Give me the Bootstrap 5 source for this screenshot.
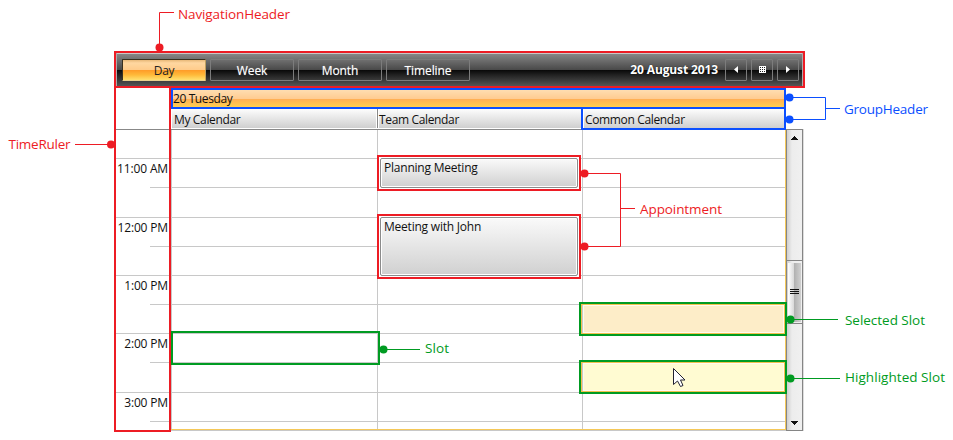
<!DOCTYPE html>
<html lang="en">
<head>
<meta charset="utf-8">
<meta name="viewport" content="width=device-width, initial-scale=1">
<title>Schedule view structure</title>
<link href="https://cdn.jsdelivr.net/npm/bootstrap@5.3.0/dist/css/bootstrap.min.css" rel="stylesheet">
<style>
body{width:953px;height:440px;overflow:hidden;background:#fff;font:12px/16px "Open Sans","Noto Sans",sans-serif;color:#111}
.stage{width:953px;height:440px;padding:51px 0 0 114px}
.sched{width:691px}
.navhead{height:37px;border:2px solid #ed1c24;padding:6px 4px 5px 6px;background:linear-gradient(#c8c8c8 0 1px,#868686 1px,#484848 17px,#080808 17px,#222 22px,#545454 33px);box-shadow:inset 1px 0 #aaa,inset -1px 0 #aaa}
.navhead .btn{width:84px;height:22px;padding:0;font-size:12px;line-height:22px;border:1px solid #7c7c7c;border-radius:1px;color:#fff;background:transparent;font-weight:500;letter-spacing:-.1px;text-shadow:0 0 1px #fff8}
.navhead .btn.sq{width:22px;line-height:0}
.navhead .btn.day{color:#222;border-color:#39301e;border-right-color:#bfa060;border-bottom-color:#e8cf8c;background:linear-gradient(#e8b878,#ffd7a0 3px,#ffcb8a 10px,#ff9a27 10px,#ffba3a 15px,#ffe070);font-weight:400;letter-spacing:-.3px;text-shadow:none}
.date{font-weight:700;letter-spacing:-.12px;color:#fff;line-height:22px;margin-right:3px;text-shadow:0 0 1px #000;white-space:nowrap}
.ruler{width:57px;height:344px;border:2px solid #ed1c24;border-top:0}
.rulertop{height:42px;border-bottom:1px solid #888}
.tick{height:29px;text-align:right;padding:2px 1px 0 0;white-space:nowrap;letter-spacing:-.15px;background:linear-gradient(#c8c8c8,#c8c8c8) right bottom/100% 1px no-repeat}
.tick.hour{background-size:19px 1px}
.tall{height:30px!important}
.grp{width:615px}
.dayhead{height:21px;border:2px solid #0b4fff;line-height:18px;letter-spacing:-.4px;background:linear-gradient(#ffddb0,#ffcb90 9px,#ffae55 9px,#ffcf50) padding-box}
.res{height:21px;border-bottom:1px solid #888;line-height:21px;white-space:nowrap;letter-spacing:-.35px}
.res>div{height:20px;padding-left:2px;border:1px solid #fff;border-top:0;background:linear-gradient(#fdfdfd,#cfcfcf)}
.res>div+div{border-left:0;box-shadow:inset 1px 0 #888,inset 2px 0 #fff}
.res>div:last-child{padding-left:3px}
.c1{width:206px}.c2{width:205px}.c3{flex:1}
.gridcol{border-left:1px solid #c8c8c8;height:299px;overflow:hidden}
.gridcol>div{height:29px;border-bottom:1px solid #c8c8c8}
.gridbody{height:300px;border-right:1px solid #f5c858;border-bottom:1px solid #f5c858;box-shadow:0 1px #c8c8c8}
.scroller{width:17px;height:302px;margin-top:41px;border:1px solid #858585;box-shadow:1px 0 #ddd;background:linear-gradient(90deg,#d0d0d0,#ededed 5px,#f0f0f0)}
.thumb{height:64px;width:15px;margin-top:130px;border:solid #858585;border-width:1px 0;padding:2px 1px 1px 1px}
.thumb>div{height:100%;background:linear-gradient(90deg,#fff,#d8d8d8 6px,#b0b0b0 6px,#d0d0d0)}
.ev{position:absolute;left:377px;width:204px;border:2px solid #ed1c24;background:#fff;padding:1px}
.ev>div{height:100%;border:1px solid #8b8b8b;border-radius:2px;box-shadow:inset 0 0 0 1px #fff;background:linear-gradient(#fafafa,#d0d0d0);padding:1px 0 0 3px;letter-spacing:-.22px}
.pick{position:absolute;border:2px solid #009b22;height:34px;left:579px;width:208px}
.pick>div{height:100%;border:1px solid #f2c14e;box-shadow:inset 1px 0 #c8c8c8,inset 2px 0 #fffaf0,inset 0 1px #fffaf0,inset 0 -1px #fffaf0,inset -1px 0 #fffaf0}
.picksel>div{background:#fdedc8}.pickhot>div{background:#fffbd2}
.over{position:absolute;left:0;top:0}
.over text{font-family:"Open Sans","Noto Sans",sans-serif;font-size:13.5px}
</style>
</head>
<body>
<div class="stage position-relative">
 <div class="sched">
  <div class="navhead d-flex justify-content-between">
   <div class="d-flex gap-1">
    <button class="btn day">Day</button><button class="btn">Week</button><button class="btn">Month</button><button class="btn">Timeline</button>
   </div>
   <div class="d-flex gap-1">
    <span class="date">20 August 2013</span>
    <button class="btn sq" aria-label="Previous"><svg width="20" height="20"><path d="M12 6v7L8 9.5z" fill="#fff"/></svg></button>
    <button class="btn sq" aria-label="Pick date"><svg width="20" height="20" shape-rendering="crispEdges"><path d="M7 6h7v7H7z" fill="#fff"/><path d="M8 7h1v1H8zM10 7h1v1h-1zM12 7h1v1h-1zM8 9h1v1H8zM10 9h1v1h-1zM12 9h1v1h-1zM8 11h1v1H8zM10 11h1v1h-1zM12 11h1v1h-1z" fill="#222"/></svg></button>
    <button class="btn sq" aria-label="Next"><svg width="20" height="20"><path d="M8 6v7l4-3.5z" fill="#fff"/></svg></button>
   </div>
  </div>
  <div class="d-flex">
   <div class="ruler">
    <div class="rulertop"></div>
    <div class="tick"></div><div class="tick hour">11:00 AM</div>
    <div class="tick tall"></div><div class="tick hour">12:00 PM</div>
    <div class="tick"></div><div class="tick hour">1:00 PM</div>
    <div class="tick"></div><div class="tick hour">2:00 PM</div>
    <div class="tick tall"></div><div class="tick hour">3:00 PM</div>
   </div>
   <div class="grp">
    <div class="dayhead">20 Tuesday</div>
    <div class="res d-flex"><div class="c1">My Calendar</div><div class="c2">Team Calendar</div><div class="c3">Common Calendar</div></div>
    <div class="gridbody d-flex">
     <div class="gridcol c1"><div></div><div></div><div class="tall"></div><div></div><div></div><div></div><div></div><div></div><div class="tall"></div><div></div></div>
     <div class="gridcol c2"><div></div><div></div><div class="tall"></div><div></div><div></div><div></div><div></div><div></div><div class="tall"></div><div></div></div>
     <div class="gridcol c3"><div></div><div></div><div class="tall"></div><div></div><div></div><div></div><div></div><div></div><div class="tall"></div><div></div></div>
    </div>
   </div>
   <div class="scroller d-flex flex-column">
    <svg width="15" height="20" style="margin-bottom:-20px" shape-rendering="crispEdges"><path d="M7 6h1v1h1v1h1v1h1v1H4V9h1V8h1V7h1z" fill="#111"/></svg>
    <div class="thumb"><div></div></div>
    <svg class="mt-auto" width="15" height="15" shape-rendering="crispEdges"><path d="M4 6h7v1h-1v1H9v1H8v1H7V9H6V8H5V7H4z" fill="#111"/></svg>
   </div>
  </div>
 </div>

 <!-- appointments and marked slots lie over the grid -->
 <div class="ev" style="top:155px;height:36px"><div>Planning Meeting</div></div>
 <div class="ev" style="top:214px;height:65px"><div>Meeting with John</div></div>
 <div class="pick" style="left:171px;width:209px;top:331px"></div>
 <div class="pick picksel" style="top:302px"><div></div></div>
 <div class="pick pickhot" style="top:360px"><div></div></div>

 <svg class="over" width="953" height="440">
  <path d="M582 108H785V129H582z" fill="none" stroke="#0b4fff" stroke-width="2"/>
  <path d="M790 289.5h9M790 291.5h9M790 293.5h9" stroke="#111"/>
  <g fill="none" stroke="#ed1c24"><path d="M174 12.5H159.500V47M75 144.500H111M585 173.500H620.500V246.500H585M620.500 208.500H635"/></g>
  <g fill="#ed1c24"><circle cx="159.500" cy="47.500" r="4"/><circle cx="111" cy="144.500" r="4"/><circle cx="584.500" cy="173.500" r="4"/><circle cx="584.500" cy="246.500" r="4"/>
   <text x="178" y="19" textLength="112">NavigationHeader</text><text x="8.500" y="149" textLength="62">TimeRuler</text><text x="640" y="214" textLength="82">Appointment</text></g>
  <g fill="none" stroke="#0b4fff"><path d="M789 97.500H825.500V119.500H789M825.500 108.500H840"/></g>
  <g fill="#0b4fff"><circle cx="789.500" cy="97.500" r="4"/><circle cx="789.500" cy="119.500" r="4"/><text x="844" y="114" textLength="84">GroupHeader</text></g>
  <g fill="none" stroke="#009b22"><path d="M384 349.500H420M791 319.500H838M791 378.500H840"/></g>
  <g fill="#009b22"><circle cx="383.500" cy="349.500" r="4"/><circle cx="790.500" cy="319.500" r="4"/><circle cx="790.500" cy="378.500" r="4"/>
   <text x="425" y="353" textLength="24">Slot</text><text x="845" y="325" textLength="80">Selected Slot</text><text x="845" y="382" textLength="100">Highlighted Slot</text></g>
  <path d="M673.500 368.500V384.500L677.500 381L680.500 386.500L683 385.500L680.500 380H685z" fill="#fff" stroke="#223" stroke-linejoin="round"/>
 </svg>
</div>
<script src="https://cdn.jsdelivr.net/npm/bootstrap@5.3.0/dist/js/bootstrap.bundle.min.js"></script>
</body>
</html>
